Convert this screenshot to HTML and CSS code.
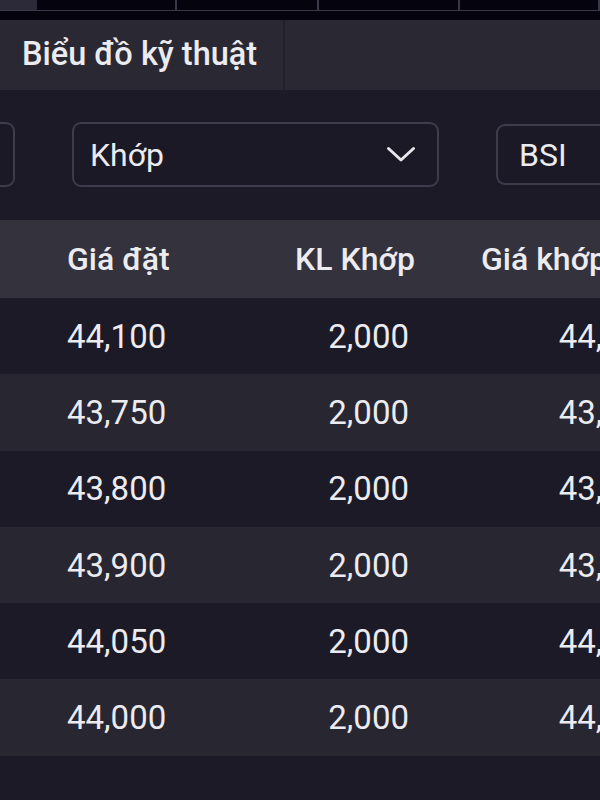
FILE: index.html
```html
<!DOCTYPE html>
<html lang="vi">
<head>
    <meta charset="UTF-8">
    <meta name="viewport" content="width=device-width, initial-scale=1.0">
    <title>Lệnh khớp</title>
    <link rel="stylesheet" href="styles.css">
</head>
<body>
    <div id="top-strip">
        <div class="strip-cell strip-first"></div>
        <div class="strip-cell" style="width: 139px"></div>
        <div class="strip-cell" style="width: 140px"></div>
        <div class="strip-cell" style="width: 140px"></div>
        <div class="strip-cell" style="width: 138px"></div>
        <div class="strip-cell strip-last"></div>
    </div>
    <div id="strip-gap"></div>

    <div id="tab-bar">
        <div class="tab active">Biểu đồ kỹ thuật</div>
        <div class="tab-rest"></div>
    </div>

    <div id="filter-row">
        <div class="filter-box filter-cut"></div>
        <div class="filter-box filter-select">
            <span>Khớp</span>
            <svg class="chevron" width="30" height="17" viewBox="0 0 30 17">
                <path d="M2.5 2.5 L15 14 L27.5 2.5" fill="none" stroke="#e6e6ec" stroke-width="3" stroke-linecap="round" stroke-linejoin="round"/>
            </svg>
        </div>
        <div class="filter-box filter-code"><span>BSI</span></div>
    </div>

    <div id="order-table">
        <div class="table-row table-head">
            <div class="cell col-price">Giá đặt</div>
            <div class="cell col-vol">KL Khớp</div>
            <div class="cell col-match">Giá khớp</div>
        </div>
        <div class="table-row">
            <div class="cell col-price">44,100</div>
            <div class="cell col-vol">2,000</div>
            <div class="cell col-match">44,100</div>
        </div>
        <div class="table-row alt">
            <div class="cell col-price">43,750</div>
            <div class="cell col-vol">2,000</div>
            <div class="cell col-match">43,750</div>
        </div>
        <div class="table-row">
            <div class="cell col-price">43,800</div>
            <div class="cell col-vol">2,000</div>
            <div class="cell col-match">43,800</div>
        </div>
        <div class="table-row alt">
            <div class="cell col-price">43,900</div>
            <div class="cell col-vol">2,000</div>
            <div class="cell col-match">43,900</div>
        </div>
        <div class="table-row">
            <div class="cell col-price">44,050</div>
            <div class="cell col-vol">2,000</div>
            <div class="cell col-match">44,050</div>
        </div>
        <div class="table-row alt">
            <div class="cell col-price">44,000</div>
            <div class="cell col-vol">2,000</div>
            <div class="cell col-match">44,000</div>
        </div>
    </div>
</body>
</html>
```

FILE: styles.css
```css
:root {
    --bg-page: #1c1a26;
    --bg-strip: #05040e;
    --bg-tab: #2a2833;
    --bg-head: #34323d;
    --bg-row-alt: #282630;
    --line: #3a3848;
    --box-border: #3d3b4c;
    --text: #ebebf0;
}

body {
    margin: 0;
    width: 600px;
    height: 800px;
    overflow: hidden;
    background: var(--bg-page);
    color: var(--text);
    font-family: Roboto, "Noto Sans", sans-serif;
}

/* --- top chart strip --- */
#top-strip {
    display: flex;
    height: 10px;
    background: var(--bg-strip);
    border-bottom: 1px solid var(--line);
}
.strip-cell {
    border-right: 2px solid var(--line);
}
.strip-first {
    width: 37px;
    border-right: none;
    background: #2c2a38;
}
.strip-last {
    flex: 1;
    border-right: none;
}
#strip-gap {
    height: 9px;
    background: var(--bg-strip);
}

/* --- tabs --- */
#tab-bar {
    display: flex;
    height: 70px;
    background: var(--bg-tab);
}
.tab {
    display: flex;
    align-items: center;
    padding: 0 24px 2px 22px;
    width: 237px;
    font-size: 32.5px;
    font-weight: 500;
    white-space: nowrap;
    border-right: 2px solid #22202b;
}
.tab-rest {
    flex: 1;
}

/* --- filters --- */
#filter-row {
    display: flex;
    gap: 57px;
    padding-top: 32px;
    height: 65px;
}
.filter-box {
    box-sizing: border-box;
    height: 65px;
    border: 2px solid var(--box-border);
    border-radius: 9px;
    background: #1b1925;
    display: flex;
    align-items: center;
    font-size: 32px;
}
.filter-cut {
    width: 15px;
    border-left: none;
    border-top-left-radius: 0;
    border-bottom-left-radius: 0;
}
.filter-select {
    width: 367px;
    padding: 0 21px 0 16px;
    justify-content: space-between;
}
.filter-code {
    flex: 1;
    height: 61px;
    margin-top: 2px;
    padding-left: 21px;
    border-top-right-radius: 0;
    border-bottom-right-radius: 0;
    border-right: none;
}

/* --- table --- */
#order-table {
    margin-top: 33px;
    width: 660px;
}
.table-row {
    display: grid;
    grid-template-columns: 230px 188px 242px;
    align-items: center;
    height: 76.3px;
    font-size: 33px;
}
.table-row.alt {
    background: var(--bg-row-alt);
}
.table-head {
    height: 78px;
    background: var(--bg-head);
    font-size: 32px;
    font-weight: 500;
}
.cell {
    white-space: nowrap;
}
.col-price {
    padding-left: 67px;
}
.col-vol {
    text-align: right;
    padding-right: 9px;
}
.col-match {
    text-align: right;
    padding-right: 2px;
}
.table-head .col-vol {
    padding-right: 3px;
}
.table-head .col-match {
    text-align: left;
    padding-left: 63px;
}
```
